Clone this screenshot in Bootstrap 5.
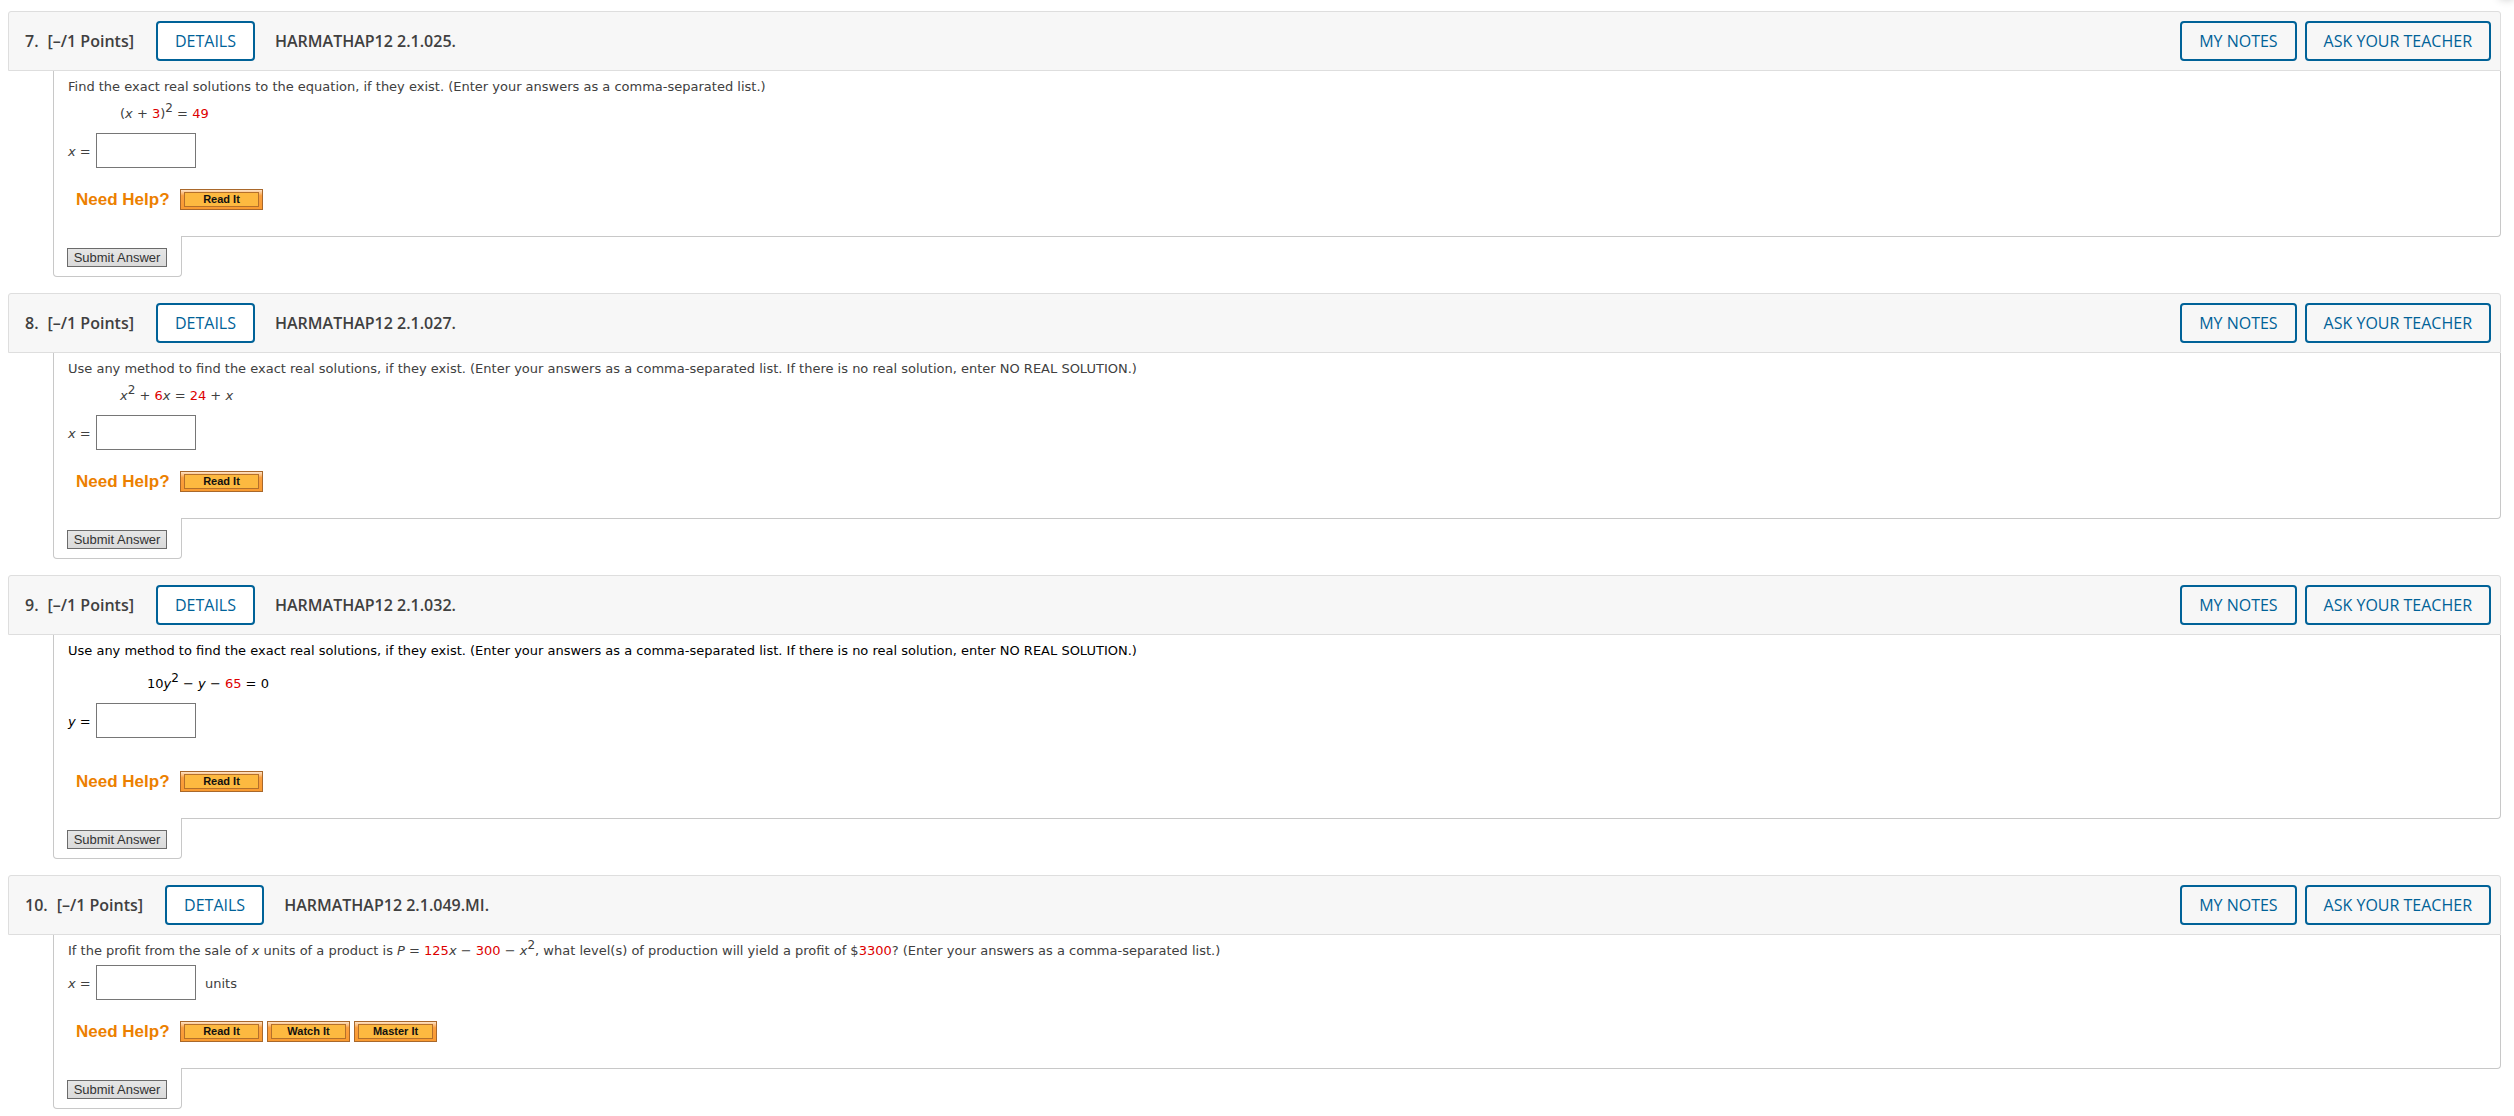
<!DOCTYPE html>
<html lang="en">
<head>
<meta charset="utf-8">
<meta name="viewport" content="width=device-width, initial-scale=1">
<title>HARMATHAP12 2.1</title>
<link href="https://cdn.jsdelivr.net/npm/bootstrap@5.3.0/dist/css/bootstrap.min.css" rel="stylesheet">
<style>
  body { font: 13px/20px Verdana, "DejaVu Sans", sans-serif; color: #404040; background: #fff; }
  .page { padding: 11px 13px 7px 8px; }
  .q-head { font: 600 16px/24px "Open Sans", sans-serif; background: #f7f7f7; border: 1px solid #dedede; border-radius: 3px 3px 0 0; padding: 9px 9px 9px 16px; }
  .q-name { padding-left: 20px; }
  .q-points { padding: 0 22px 0 9px; }
  .btn-outline { font: 400 16px/24px "Open Sans", sans-serif; color: #006298; border: 2px solid #006298; border-radius: 4px; padding: 6px 17px; background: #f7f7f7; }
  .btn-outline.on-white { background: #fff; }
  .q-body { margin-left: 45px; border: 1px solid #c8c8c8; border-top: 0; border-radius: 0 0 4px 0; padding: 6px 14px 26px; }
  .q-tab { margin: -1px 0 0 45px; width: 129px; background: #fff; border: 1px solid #c8c8c8; border-top: 0; border-radius: 0 0 4px 4px; padding: 12px 13px 9px; position: relative; }
  .ink-black { color: #000; }
  .rnd { color: #d00; }
  sup { font-size: 12px; line-height: 0; top: -6px; vertical-align: baseline; }
  .eqn { padding-left: 52px; margin: 7px 0 9px; }
  .eqn-far { padding-left: 79px; margin-top: 13px; }
  .answer { height: 35px; }
  .answer label, .answer span { padding-top: 3px; }
  .answer label { width: 28px; }
  .answer input { width: 100px; height: 35px; border: 1px solid #767676; border-radius: 0; background: #fff; margin-right: 9px; padding: 2px 6px; }
  .help { margin-top: 21px; padding-left: 8px; height: 21px; }
  .help-far { margin-top: 33px; }
  .help-title { font: 700 17px/20px "Liberation Sans", Arial, sans-serif; color: #ec8000; width: 100px; }
  .help-btn { font: 700 11px/13px "Liberation Sans", Arial, sans-serif; color: #111; width: 83px; height: 21px; padding: 2px 3px; border: 1px solid #a9682b; background: linear-gradient(#fde3c8, #fba040 30%, #f99a30); }
  .help-btn span { display: block; height: 15px; border: 1px solid #b5702a; background: #fdb940; }
  .submit { font: 400 13px/17px "Liberation Sans", Arial, sans-serif; color: #333; width: 100px; height: 19px; padding: 0; border: 1px solid #6b6b6b; background: linear-gradient(#e6e6e6, #dadada); white-space: nowrap; }
  .corner { position: absolute; top: -10px; right: 0; width: 14px; height: 8px; box-shadow: 0 0 10px rgba(0,0,0,.3); }
</style>
<script src="https://cdn.jsdelivr.net/npm/bootstrap@5.3.0/dist/js/bootstrap.bundle.min.js"></script>
</head>
<body>
<div class="corner"></div>
<main class="page d-flex flex-column gap-3">

  <section>
    <header class="q-head d-flex align-items-center">
      <span>7.</span><span class="q-points">[–/1 Points]</span>
      <button type="button" class="btn-outline on-white">DETAILS</button>
      <span class="q-name">HARMATHAP12 2.1.025.</span>
      <div class="d-flex gap-2 ms-auto"><button type="button" class="btn-outline">MY NOTES</button><button type="button" class="btn-outline">ASK YOUR TEACHER</button></div>
    </header>
    <div class="q-body">
      <div>Find the exact real solutions to the equation, if they exist. (Enter your answers as a comma-separated list.)</div>
      <div class="eqn">(<i>x</i> + <span class="rnd">3</span>)<sup>2</sup> = <span class="rnd">49</span></div>
      <div class="answer d-flex align-items-center"><label for="a7"><i>x</i> =</label><input id="a7" type="text"></div>
      <div class="help d-flex align-items-center gap-1"><span class="help-title">Need Help?</span><button type="button" class="help-btn"><span>Read It</span></button></div>
    </div>
    <div class="q-tab"><button type="submit" class="submit d-block">Submit Answer</button></div>
  </section>

  <section>
    <header class="q-head d-flex align-items-center">
      <span>8.</span><span class="q-points">[–/1 Points]</span>
      <button type="button" class="btn-outline on-white">DETAILS</button>
      <span class="q-name">HARMATHAP12 2.1.027.</span>
      <div class="d-flex gap-2 ms-auto"><button type="button" class="btn-outline">MY NOTES</button><button type="button" class="btn-outline">ASK YOUR TEACHER</button></div>
    </header>
    <div class="q-body">
      <div>Use any method to find the exact real solutions, if they exist. (Enter your answers as a comma-separated list. If there is no real solution, enter NO REAL SOLUTION.)</div>
      <div class="eqn"><i>x</i><sup>2</sup> + <span class="rnd">6</span><i>x</i> = <span class="rnd">24</span> + <i>x</i></div>
      <div class="answer d-flex align-items-center"><label for="a8"><i>x</i> =</label><input id="a8" type="text"></div>
      <div class="help d-flex align-items-center gap-1"><span class="help-title">Need Help?</span><button type="button" class="help-btn"><span>Read It</span></button></div>
    </div>
    <div class="q-tab"><button type="submit" class="submit d-block">Submit Answer</button></div>
  </section>

  <section>
    <header class="q-head d-flex align-items-center">
      <span>9.</span><span class="q-points">[–/1 Points]</span>
      <button type="button" class="btn-outline on-white">DETAILS</button>
      <span class="q-name">HARMATHAP12 2.1.032.</span>
      <div class="d-flex gap-2 ms-auto"><button type="button" class="btn-outline">MY NOTES</button><button type="button" class="btn-outline">ASK YOUR TEACHER</button></div>
    </header>
    <div class="q-body ink-black">
      <div>Use any method to find the exact real solutions, if they exist. (Enter your answers as a comma-separated list. If there is no real solution, enter NO REAL SOLUTION.)</div>
      <div class="eqn eqn-far">10<i>y</i><sup>2</sup> − <i>y</i> − <span class="rnd">65</span> = 0</div>
      <div class="answer d-flex align-items-center"><label for="a9"><i>y</i> =</label><input id="a9" type="text"></div>
      <div class="help help-far d-flex align-items-center gap-1"><span class="help-title">Need Help?</span><button type="button" class="help-btn"><span>Read It</span></button></div>
    </div>
    <div class="q-tab"><button type="submit" class="submit d-block">Submit Answer</button></div>
  </section>

  <section>
    <header class="q-head d-flex align-items-center">
      <span>10.</span><span class="q-points">[–/1 Points]</span>
      <button type="button" class="btn-outline on-white">DETAILS</button>
      <span class="q-name">HARMATHAP12 2.1.049.MI.</span>
      <div class="d-flex gap-2 ms-auto"><button type="button" class="btn-outline">MY NOTES</button><button type="button" class="btn-outline">ASK YOUR TEACHER</button></div>
    </header>
    <div class="q-body">
      <div class="mb-1">If the profit from the sale of <i>x</i> units of a product is <i>P</i> = <span class="rnd">125</span><i>x</i> − <span class="rnd">300</span> − <i>x</i><sup>2</sup>, what level(s) of production will yield a profit of $<span class="rnd">3300</span>? (Enter your answers as a comma-separated list.)</div>
      <div class="answer d-flex align-items-center"><label for="a10"><i>x</i> =</label><input id="a10" type="text"><span>units</span></div>
      <div class="help d-flex align-items-center gap-1"><span class="help-title">Need Help?</span><button type="button" class="help-btn"><span>Read It</span></button><button type="button" class="help-btn"><span>Watch It</span></button><button type="button" class="help-btn"><span>Master It</span></button></div>
    </div>
    <div class="q-tab"><button type="submit" class="submit d-block">Submit Answer</button></div>
  </section>

</main>
</body>
</html>
